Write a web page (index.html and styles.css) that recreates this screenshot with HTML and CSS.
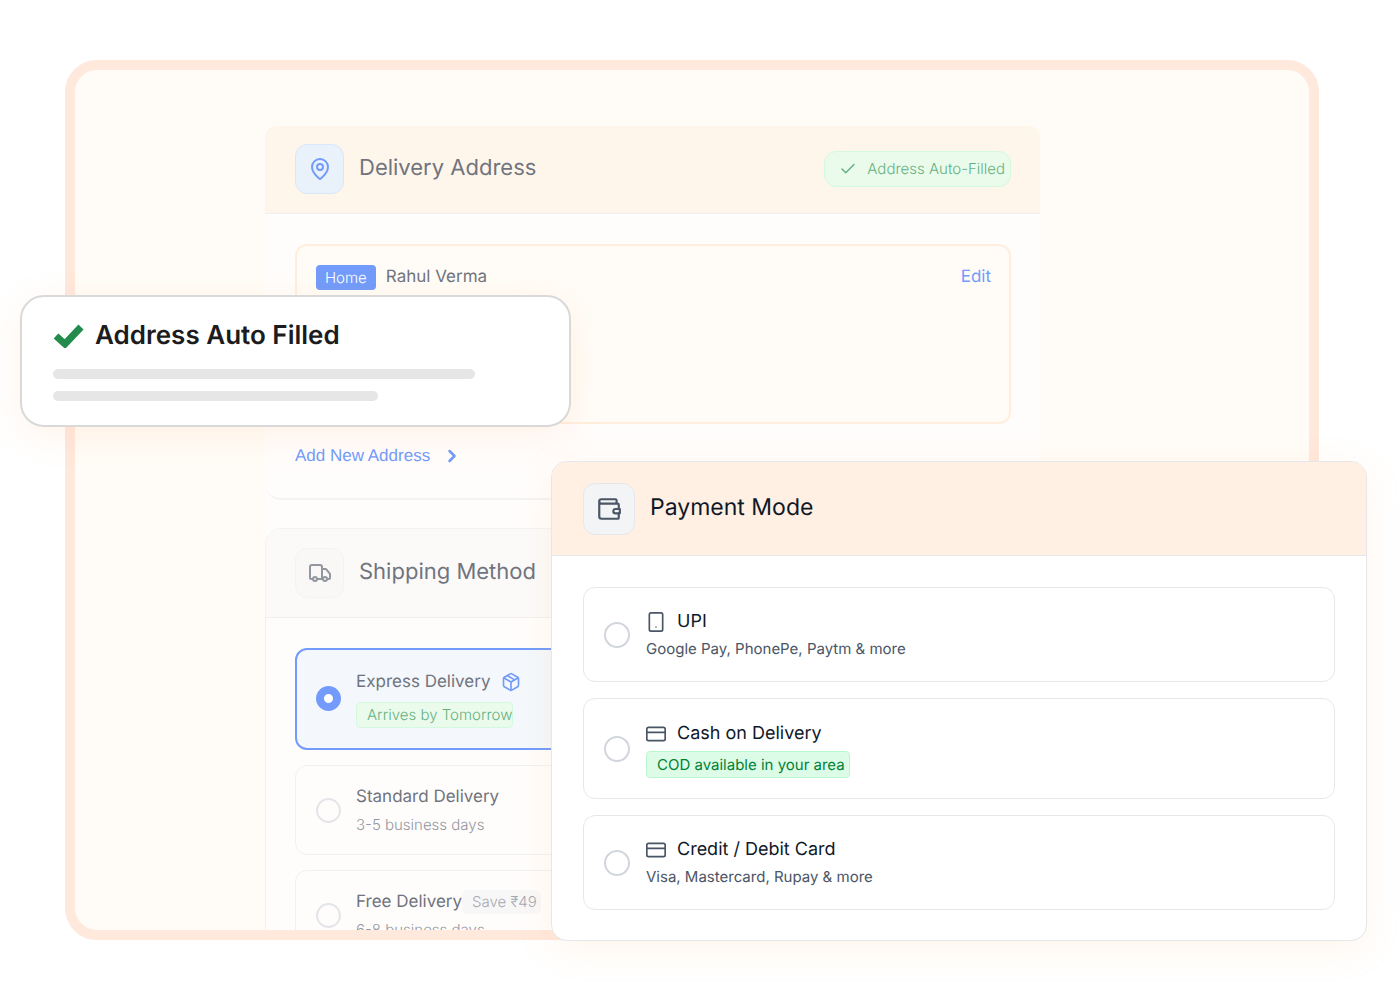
FILE: index.html
```html
<!DOCTYPE html>
<html lang="en">
<head>
    <meta charset="UTF-8">
    <meta name="viewport" content="width=device-width, initial-scale=1.0">
    <title>Checkout</title>
    <link rel="stylesheet" href="styles.css">
</head>
<body>
    <main class="stage">
        <div class="frame">
            <div class="checkout">
                <section class="card address-card">
                    <header class="card-header">
                        <span class="icon-box blue">
                            <svg width="24" height="24" viewBox="0 0 24 24"><path d="M20 10c0 4.993-5.539 10.193-7.399 11.799a1 1 0 0 1-1.202 0C9.539 20.193 4 14.993 4 10a8 8 0 0 1 16 0"/><circle cx="12" cy="10" r="3"/></svg>
                        </span>
                        <h2>Delivery Address</h2>
                        <span class="auto-badge">
                            <svg width="18" height="18" viewBox="0 0 24 24"><path d="M20 6 9 17l-5-5"/></svg>
                            Address Auto-Filled
                        </span>
                    </header>
                    <div class="card-body">
                        <div class="address">
                            <span class="tag">Home</span>
                            <span class="name">Rahul Verma</span>
                            <a href="#" class="edit">Edit</a>
                        </div>
                        <a href="#" class="add-address">
                            Add New Address
                            <svg width="20" height="20" viewBox="0 0 24 24"><path d="m9 18 6-6-6-6"/></svg>
                        </a>
                    </div>
                </section>

                <section class="card shipping-card">
                    <header class="card-header">
                        <span class="icon-box">
                            <svg width="24" height="24" viewBox="0 0 24 24"><path d="M14 18V6a2 2 0 0 0-2-2H4a2 2 0 0 0-2 2v11a1 1 0 0 0 1 1h2"/><path d="M15 18H9"/><path d="M19 18h2a1 1 0 0 0 1-1v-3.650a1 1 0 0 0-.22-.624l-3.480-4.350A1 1 0 0 0 17.520 8H14"/><circle cx="17" cy="18" r="2"/><circle cx="7" cy="18" r="2"/></svg>
                        </span>
                        <h2>Shipping Method</h2>
                    </header>
                    <div class="card-body options">
                        <label class="option selected">
                            <input type="radio" name="shipping" checked>
                            <span class="option-text">
                                <span class="option-title">Express Delivery
                                    <svg class="package" width="20" height="20" viewBox="0 0 24 24"><path d="M11 21.730a2 2 0 0 0 2 0l7-4A2 2 0 0 0 21 16V8a2 2 0 0 0-1-1.730l-7-4a2 2 0 0 0-2 0l-7 4A2 2 0 0 0 3 8v8a2 2 0 0 0 1 1.730z"/><path d="M12 22V12"/><path d="M3.290 7 12 12l8.710-5"/><path d="m7.500 4.270 9 5.150"/></svg>
                                </span>
                                <span class="green-badge">Arrives by Tomorrow</span>
                            </span>
                        </label>
                        <label class="option">
                            <input type="radio" name="shipping">
                            <span class="option-text">
                                <span class="option-title">Standard Delivery</span>
                                <span class="option-note">3-5 business days</span>
                            </span>
                        </label>
                        <label class="option">
                            <input type="radio" name="shipping">
                            <span class="option-text">
                                <span class="option-title">Free Delivery<span class="save">Save ₹49</span></span>
                                <span class="option-note">6-8 business days</span>
                            </span>
                        </label>
                    </div>
                </section>
            </div>
        </div>

        <!-- Toast -->
        <aside class="toast">
            <h3>
                <svg width="31" height="24" viewBox="0 0 31 24"><path d="M3 12 12 20 28 3"/></svg>
                Address Auto Filled
            </h3>
            <div class="line"></div>
            <div class="line short"></div>
        </aside>

        <!-- Payment panel -->
        <section class="payment">
            <header class="payment-header">
                <span class="icon-box">
                    <svg width="26" height="26" viewBox="0 0 24 24"><path d="M19 7V4a1 1 0 0 0-1-1H5a2 2 0 0 0 0 4h15a1 1 0 0 1 1 1v4M21 16v4a1 1 0 0 1-1 1H5a2 2 0 0 1-2-2V5"/><path d="M22 12h-4a2 2 0 0 0 0 4h4z"/></svg>
                </span>
                <h2>Payment Mode</h2>
            </header>
            <div class="payment-body">
                <label class="option">
                    <input type="radio" name="payment">
                    <span class="option-text">
                        <span class="option-title">
                            <svg width="20" height="20" viewBox="0 0 24 24"><rect x="4" y="1" width="16" height="22" rx="2"/><path d="M12 18h.01"/></svg>
                            UPI
                        </span>
                        <span class="option-note">Google Pay, PhonePe, Paytm &amp; more</span>
                    </span>
                </label>
                <label class="option cod">
                    <input type="radio" name="payment">
                    <span class="option-text">
                        <span class="option-title">
                            <svg width="20" height="20" viewBox="0 0 24 24"><rect x="1" y="4" width="22" height="16" rx="2"/><path d="M1 10h22"/></svg>
                            Cash on Delivery
                        </span>
                        <span class="green-badge">COD available in your area</span>
                    </span>
                </label>
                <label class="option">
                    <input type="radio" name="payment">
                    <span class="option-text">
                        <span class="option-title">
                            <svg width="20" height="20" viewBox="0 0 24 24"><rect x="1" y="4" width="22" height="16" rx="2"/><path d="M1 10h22"/></svg>
                            Credit / Debit Card
                        </span>
                        <span class="option-note">Visa, Mastercard, Rupay &amp; more</span>
                    </span>
                </label>
            </div>
        </section>
    </main>
</body>
</html>
```
FILE: styles.css
```css
* {
    box-sizing: border-box;
}

body {
    margin: 0;
    font-family: Inter, "Liberation Sans", sans-serif;
    text-rendering: geometricPrecision;
    background-color: #fff;
    color: #101828;
}

h2, h3 {
    margin: 0;
    font-weight: 400;
}

a {
    color: #729bfb;
    text-decoration: none;
}

svg {
    flex: none;
    fill: none;
    stroke: currentColor;
    stroke-width: 2;
    stroke-linecap: round;
    stroke-linejoin: round;
}

.stage {
    position: relative;
    height: 100vh;
    padding: 60px 81px 60px 65px;
    overflow: hidden;
}

.frame {
    height: 100%;
    padding: 56px 269px 0 190px;
    border: 10px solid #ffe8dc;
    border-radius: 32px;
    background-color: #fffcf7;
    overflow: hidden;
}

/* Checkout column */
.checkout {
    display: flex;
    flex-direction: column;
    gap: 28px;
    background-color: #fffdfc;
    color: #70747e;
}

.card {
    border: 1px solid #f3f3f4;
    border-radius: 16px;
    overflow: hidden;
}

.address-card {
    border-width: 0 0 2px;
    border-radius: 10px 10px 16px 16px;
}

.card-header {
    display: flex;
    align-items: center;
    gap: 15px;
    height: 88px;
    padding: 0 29px 2px 30px;
    border-bottom: 1px solid #f1efee;
    background-color: #fff6eb;
}

.shipping-card .card-header {
    height: 89px;
    padding: 0 29px;
    background-color: #fbfaf9;
}

.card-header h2 {
    padding-bottom: 2px;
    font-size: 22px;
    line-height: 32px;
}

.icon-box {
    display: flex;
    align-items: center;
    justify-content: center;
    width: 49px;
    height: 50px;
    border: 1px solid #f3f3f3;
    border-radius: 12px;
    background-color: #f9f8f7;
    color: #92979f;
}

.icon-box.blue {
    border-color: #d9e7fb;
    background-color: #e9f1fb;
    color: #729bfb;
}

.auto-badge {
    display: flex;
    align-items: center;
    gap: 10px;
    height: 36px;
    margin-left: auto;
    padding: 0 5px 0 14px;
    border: 1px solid #d3f9de;
    border-radius: 12px;
    background-color: #eafbec;
    color: #66b182;
    font-size: 15px;
    font-weight: 350;
}

.card-body {
    padding: 30px 29px 30px 30px;
}

.shipping-card .card-body {
    padding-left: 29px;
}

.address {
    display: flex;
    align-items: flex-start;
    gap: 10px;
    height: 180px;
    padding: 19px 18px 19px 19px;
    border: 2px solid #ffeedd;
    border-radius: 12px;
    background-color: #fffcf7;
    font-size: 17px;
    line-height: 25px;
}

.tag {
    padding: 0 9px;
    border-radius: 4px;
    background-color: #729bfb;
    color: #fff;
    font-size: 15px;
    font-weight: 350;
}

.edit {
    margin-left: auto;
}

.add-address {
    display: flex;
    align-items: center;
    gap: 12px;
    margin-top: 20px;
    font-family: "Liberation Sans", Arial, sans-serif;
    font-size: 17px;
    line-height: 24px;
}

.add-address svg {
    stroke-width: 3;
}

/* Options */
.options {
    display: flex;
    flex-direction: column;
    gap: 15px;
}

.option {
    display: flex;
    align-items: center;
    gap: 15px;
    height: 90px;
    padding: 0 20px;
    border: 1px solid #f1f1f2;
    border-radius: 12px;
}

.option.selected {
    height: 102px;
    padding: 0 19px 2px;
    border: 2px solid #729bfb;
    background-color: #f4f8fc;
}

.option input {
    appearance: none;
    flex: none;
    width: 25px;
    height: 25px;
    margin: 0;
    border: 2px solid #e4e5e8;
    border-radius: 50%;
}

.option input:checked {
    border: 8px solid #729bfb;
    background-color: #fff;
}

.option-text {
    display: flex;
    flex-direction: column;
    align-items: flex-start;
    gap: 3px;
}

.option.selected .option-text {
    gap: 7px;
}

.option-title {
    display: flex;
    align-items: center;
    font-size: 17px;
    line-height: 26px;
}

.option-note {
    color: #92979f;
    font-size: 15px;
    font-weight: 350;
    line-height: 24px;
}

.package {
    margin-left: 11px;
    color: #729bfb;
}

.green-badge {
    padding: 0 0 0 10px;
    border: 1px solid #d3f9de;
    border-radius: 4px;
    background-color: #eafbec;
    color: #66b182;
    font-size: 15px;
    font-weight: 350;
    line-height: 24px;
}

.save {
    padding: 0 4px 0 10px;
    border-radius: 6px;
    background-color: #f8f7f7;
    color: #a5a9b2;
    font-size: 15px;
    font-weight: 350;
    line-height: 24px;
}

/* Toast over the left edge */
.toast {
    position: absolute;
    top: 295px;
    left: 20px;
    width: 551px;
    padding: 23px 31px 24px;
    border: 2px solid #d9d9d9;
    border-radius: 24px;
    background-color: #fff;
    box-shadow: 0 8px 36px rgba(255, 160, 80, 0.12);
}

.toast h3 {
    display: flex;
    align-items: center;
    gap: 11px;
    margin-bottom: 17px;
    color: #1c1b20;
    font-size: 26px;
    font-weight: 600;
    line-height: 32px;
}

.toast svg {
    color: #238b4b;
    stroke-width: 7;
    stroke-linecap: butt;
    stroke-linejoin: miter;
}

.line {
    width: 422px;
    height: 10px;
    border-radius: 5px;
    background-color: #e6e6e6;
}

.line.short {
    width: 325px;
    margin-top: 12px;
}

/* Payment panel over the bottom right */
.payment {
    position: absolute;
    top: 461px;
    right: 33px;
    width: 816px;
    border: 1px solid #e5e7eb;
    border-radius: 16px;
    background-color: #fff;
    box-shadow: 0 8px 36px rgba(255, 170, 90, 0.12);
    overflow: hidden;
}

.payment-header {
    display: flex;
    align-items: center;
    gap: 15px;
    height: 94px;
    padding: 0 31px;
    border-bottom: 1px solid #e5e7eb;
    background-color: #fff0e3;
}

.payment-header .icon-box {
    width: 52px;
    height: 52px;
    border-color: #e5e7eb;
    background-color: #f3f4f6;
    color: #4a5565;
}

.payment-header h2 {
    padding-bottom: 4px;
    font-size: 23px;
    line-height: 32px;
}

.payment-body {
    display: flex;
    flex-direction: column;
    gap: 16px;
    padding: 31px 31px 30px;
}

.payment .option {
    gap: 16px;
    height: 95px;
    border-color: #e5e7eb;
}

.payment .option.cod {
    height: 101px;
}

.payment .option input {
    width: 26px;
    height: 26px;
    border-color: #d1d5dc;
}

.payment .option-text {
    gap: 2px;
    padding-top: 1px;
}

.payment .cod .option-text {
    gap: 4px;
}

.payment .option-title {
    gap: 11px;
    font-size: 18px;
}

.payment .option-title svg {
    color: #4a5565;
}

.payment .option-note {
    color: #4a5565;
    font-weight: 400;
}

.payment .green-badge {
    padding-right: 4px;
    border-color: #b9f8cf;
    background-color: #dcfce7;
    color: #008236;
    font-weight: 400;
    line-height: 25px;
}
```
